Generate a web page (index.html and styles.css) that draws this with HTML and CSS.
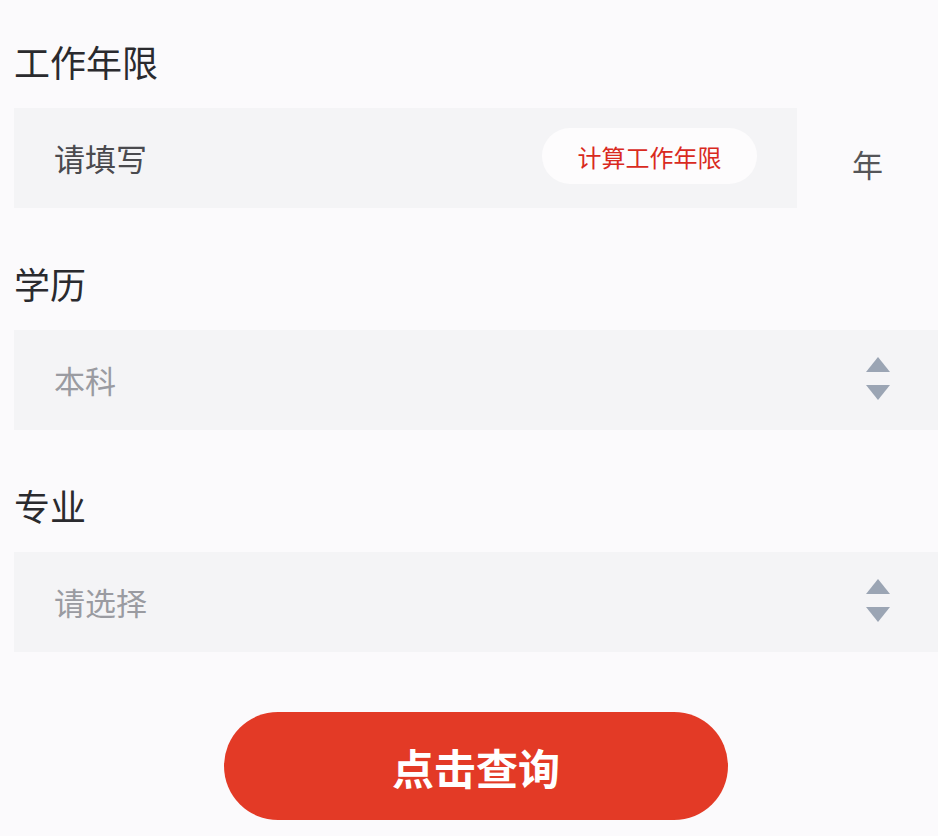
FILE: index.html
```html
<!DOCTYPE html>
<html lang="zh">
<head>
<meta charset="utf-8">
<link rel="stylesheet" href="styles.css">
</head>
<body>
<main class="form">
  <section class="group">
    <div class="label">工作年限</div>
    <div class="row">
      <div class="field field-short">
        <span class="value dark">请填写</span>
        <button class="calc">计算工作年限</button>
      </div>
      <span class="unit">年</span>
    </div>
  </section>
  <section class="group">
    <div class="label">学历</div>
    <div class="field">
      <span class="value">本科</span>
      <span class="arrows"><i class="up"></i><i class="down"></i></span>
    </div>
  </section>
  <section class="group">
    <div class="label">专业</div>
    <div class="field">
      <span class="value">请选择</span>
      <span class="arrows"><i class="up"></i><i class="down"></i></span>
    </div>
  </section>
  <div class="actions">
    <button class="submit">点击查询</button>
  </div>
</main>
</body>
</html>
```

FILE: styles.css
```css
html, body {
  margin: 0;
  padding: 0;
  background: #fbfafc;
}
body {
  font-family: "Noto Sans CJK SC", "Noto Sans", sans-serif;
  width: 938px;
  height: 836px;
  overflow: hidden;
}
.form {
  padding: 41px 0 0 14px;
  display: flex;
  flex-direction: column;
}
.group {
  display: flex;
  flex-direction: column;
  margin-bottom: 55px;
}
.group:nth-of-type(3) {
  margin-bottom: 60px;
}
.label {
  font-size: 36px;
  line-height: 40px;
  height: 40px;
  color: #2a2a2e;
  margin-bottom: 27px;
}
.row {
  display: flex;
  align-items: center;
}
.field {
  height: 100px;
  background: #f4f4f6;
  display: flex;
  align-items: center;
  justify-content: space-between;
  padding: 0 48px 0 40px;
  box-sizing: border-box;
}
.field-short {
  width: 783px;
  padding-right: 40px;
}
.value {
  font-size: 31px;
  color: #9a9ba1;
  line-height: 40px;
}
.value.dark {
  color: #4a4a4e;
}
.calc {
  height: 56px;
  width: 215px;
  border: none;
  border-radius: 28px;
  background: #fdfcfd;
  color: #d92a1e;
  font-family: "Noto Sans CJK SC", sans-serif;
  font-size: 24px;
  padding: 0;
  margin-bottom: 4px;
}
.unit {
  font-size: 31px;
  color: #555558;
  margin-left: 55px;
  margin-top: 10px;
}
.arrows {
  display: flex;
  flex-direction: column;
  align-items: center;
  gap: 13px;
  margin-top: -3px;
}
.arrows i {
  display: block;
  width: 0;
  height: 0;
  border-left: 12px solid transparent;
  border-right: 12px solid transparent;
}
.arrows .up {
  border-bottom: 15px solid #9ba5b4;
}
.arrows .down {
  border-top: 15px solid #9ba5b4;
}
.actions {
  display: flex;
  padding-left: 210px;
}
.submit {
  width: 504px;
  height: 108px;
  border: none;
  border-radius: 54px;
  background: #e33a26;
  color: #ffffff;
  font-family: "Noto Sans CJK SC", sans-serif;
  font-size: 42px;
  font-weight: 700;
  padding: 0;
}
```
